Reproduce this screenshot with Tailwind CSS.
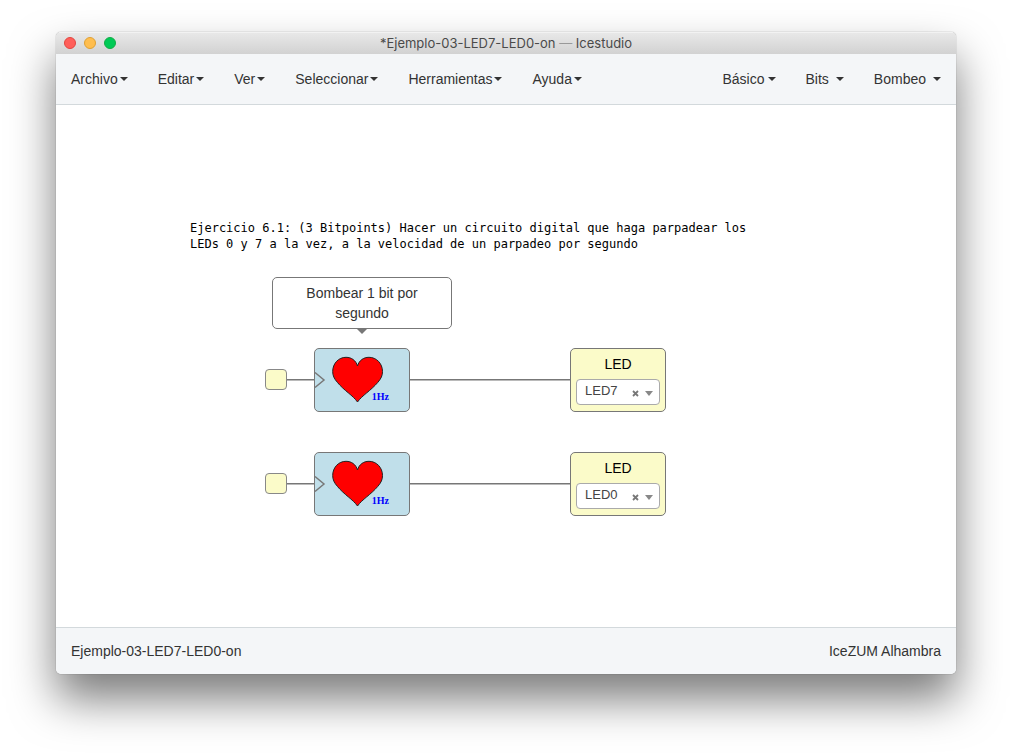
<!DOCTYPE html>
<html lang="es">
<head>
<meta charset="utf-8">
<title>Icestudio</title>
<script src="https://cdn.jsdelivr.net/npm/@tailwindcss/browser@4"></script>
</head>
<body class="flex min-h-screen flex-col overflow-hidden bg-white px-14 pt-8 pb-20 font-['Liberation_Sans',sans-serif] text-sm text-[#333]">
<svg class="hidden" aria-hidden="true">
  <symbol id="caret" viewBox="0 0 8 4"><path d="M0 0h8L4 4z" fill="#333"/></symbol>
  <symbol id="heart" viewBox="0 0 96 64">
    <path d="M1 24.500 L10 32 L1 39.500" fill="none" stroke="#777" stroke-width="1.500"/>
    <path d="M43.500 54 C39 47.500 30 42.500 23.500 34.500 C20 30.500 18.700 27.500 18.700 23.500 C18.700 15.500 24.500 9.300 32 9.300 C37.500 9.300 42 12.500 43.500 18 C45 12.500 49.500 9.300 55 9.300 C62.500 9.300 68.500 15.500 68.500 23.500 C68.500 27.500 67.200 30.500 63.700 34.500 C57 42.500 48 47.500 43.500 54Z" fill="#f00" stroke="#222" stroke-width="1"/>
  </symbol>
</svg>
<div class="flex flex-1 flex-col overflow-hidden rounded-[5px] bg-white shadow-[0_25px_45px_rgba(0,0,0,0.52),0_0_1px_rgba(0,0,0,0.6)]">
  <header class="relative flex h-[22px] items-center justify-center border-t border-[#f2f2f2] bg-linear-to-b from-[#e8e8e8] to-[#d2d2d2]">
    <div class="absolute top-[4px] left-2 flex gap-2">
      <button aria-label="Cerrar" class="size-3 rounded-full border border-[#e2463f] bg-[#ff5f5a]"></button>
      <button aria-label="Minimizar" class="size-3 rounded-full border border-[#dfa033] bg-[#ffbe4f]"></button>
      <button aria-label="Maximizar" class="size-3 rounded-full border border-[#12ac45] bg-[#00ca56]"></button>
    </div>
    <h1 class="font-['Inter',sans-serif] text-[13px] text-[#4a4a4a]">*Ejemplo-03-LED7-LED0-on <span class="text-[#999]">—</span> Icestudio</h1>
  </header>
  <nav class="flex h-[51px] items-center justify-between border-b border-[#d3d9dc] bg-[#f4f6f8] px-[15px]">
    <div class="flex gap-[30px]">
      <button class="flex items-center gap-[2px]">Archivo<svg class="h-1 w-2"><use href="#caret"/></svg></button>
      <button class="flex items-center gap-[2px]">Editar<svg class="h-1 w-2"><use href="#caret"/></svg></button>
      <button class="flex items-center gap-[2px]">Ver<svg class="h-1 w-2"><use href="#caret"/></svg></button>
      <button class="flex items-center gap-[2px]">Seleccionar<svg class="h-1 w-2"><use href="#caret"/></svg></button>
      <button class="flex items-center gap-[2px]">Herramientas<svg class="h-1 w-2"><use href="#caret"/></svg></button>
      <button class="flex items-center gap-[2px]">Ayuda<svg class="h-1 w-2"><use href="#caret"/></svg></button>
    </div>
    <div class="flex gap-[30px]">
      <button class="flex items-center gap-[3px]">Básico<svg class="h-1 w-2"><use href="#caret"/></svg></button>
      <button class="flex items-center gap-[7px]">Bits<svg class="h-1 w-2"><use href="#caret"/></svg></button>
      <button class="flex items-center gap-[7px]">Bombeo<svg class="h-1 w-2"><use href="#caret"/></svg></button>
    </div>
  </nav>
  <main class="relative flex-1">
    <p class="absolute top-[115px] left-[134px] font-['DejaVu_Sans_Mono',monospace] text-xs whitespace-nowrap text-black">Ejercicio 6.1: (3 Bitpoints) Hacer un circuito digital que haga parpadear los<br>LEDs 0 y 7 a la vez, a la velocidad de un parpadeo por segundo</p>

    <div class="absolute top-[172px] left-[216px] w-[180px] rounded-[5px] border border-[#777] bg-white px-5 py-[5px] text-center">Bombear 1 bit por segundo
      <svg class="absolute top-full left-1/2 h-[6px] w-[12px] -translate-x-1/2" viewBox="0 0 12 6"><path d="M0 0h12L6 6z" fill="#777"/></svg>
    </div>

    <svg class="absolute top-0 left-0 h-[420px] w-[620px]" viewBox="0 0 620 420" fill="none" stroke="#777" stroke-width="1.500">
      <path d="M230 274.700H516M230 378.700H516"/>
    </svg>

    <div class="absolute top-[264px] left-[209px] h-[21px] w-[22px] rounded-[4px] border border-[#888] bg-[#fbfbc9]"></div>
    <div class="absolute top-[243px] left-[258px] h-16 w-24 rounded-[5px] border border-[#777] bg-[#c0dfea]">
      <svg class="absolute -top-px -left-px h-16 w-24"><use href="#heart"/></svg>
      <span class="absolute right-[20px] bottom-[8px] font-['Liberation_Serif',serif] text-[10px] leading-3 font-bold text-[#00f]">1Hz</span>
    </div>
    <div class="absolute top-[243px] left-[514px] flex h-16 w-24 flex-col rounded-[5px] border border-[#777] bg-[#fbfbc9] px-[5px] pt-[5px] text-center text-black">
      <label for="led-a">LED</label>
      <div class="relative mt-[5px]">
        <select id="led-a" class="block h-[26px] w-full appearance-none rounded-[4px] border border-[#aaa] bg-white pb-[2px] pl-2 text-[13px] text-[#444]"><option>LED7</option><option>LED0</option></select>
        <button aria-label="Borrar LED7" class="absolute top-[11px] right-[21px] size-[7px]"><svg class="size-full" viewBox="0 0 7 7"><path d="M1 1l5 5M6 1l-5 5" stroke="#777" stroke-width="1.800"/></svg></button>
        <svg class="pointer-events-none absolute top-[12px] right-[7px] h-[5px] w-2" viewBox="0 0 8 5"><path d="M0 0h8L4 5z" fill="#888"/></svg>
      </div>
    </div>

    <div class="absolute top-[368px] left-[209px] h-[21px] w-[22px] rounded-[4px] border border-[#888] bg-[#fbfbc9]"></div>
    <div class="absolute top-[347px] left-[258px] h-16 w-24 rounded-[5px] border border-[#777] bg-[#c0dfea]">
      <svg class="absolute -top-px -left-px h-16 w-24"><use href="#heart"/></svg>
      <span class="absolute right-[20px] bottom-[8px] font-['Liberation_Serif',serif] text-[10px] leading-3 font-bold text-[#00f]">1Hz</span>
    </div>
    <div class="absolute top-[347px] left-[514px] flex h-16 w-24 flex-col rounded-[5px] border border-[#777] bg-[#fbfbc9] px-[5px] pt-[5px] text-center text-black">
      <label for="led-b">LED</label>
      <div class="relative mt-[5px]">
        <select id="led-b" class="block h-[26px] w-full appearance-none rounded-[4px] border border-[#aaa] bg-white pb-[2px] pl-2 text-[13px] text-[#444]"><option>LED0</option><option>LED7</option></select>
        <button aria-label="Borrar LED0" class="absolute top-[11px] right-[21px] size-[7px]"><svg class="size-full" viewBox="0 0 7 7"><path d="M1 1l5 5M6 1l-5 5" stroke="#777" stroke-width="1.800"/></svg></button>
        <svg class="pointer-events-none absolute top-[12px] right-[7px] h-[5px] w-2" viewBox="0 0 8 5"><path d="M0 0h8L4 5z" fill="#888"/></svg>
      </div>
    </div>
  </main>
  <footer class="flex h-[47px] items-center justify-between border-t border-[#d3d9dc] bg-[#f4f6f8] px-[15px]">
    <span>Ejemplo-03-LED7-LED0-on</span>
    <span>IceZUM Alhambra</span>
  </footer>
</div>
</body>
</html>
